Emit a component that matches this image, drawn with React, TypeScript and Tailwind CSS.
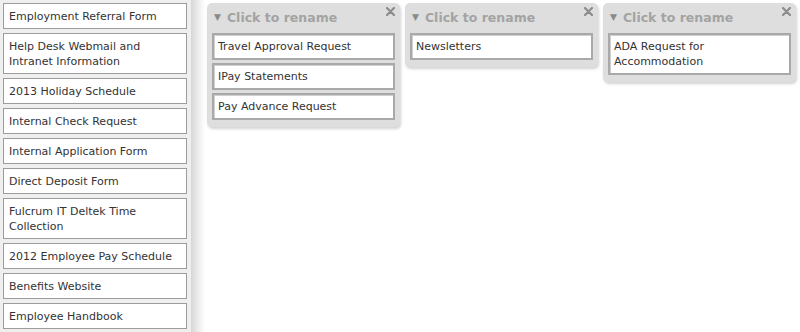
import React from "react"

const links = [
  "Employment Referral Form",
  "Help Desk Webmail and Intranet Information",
  "2013 Holiday Schedule",
  "Internal Check Request",
  "Internal Application Form",
  "Direct Deposit Form",
  "Fulcrum IT Deltek Time Collection",
  "2012 Employee Pay Schedule",
  "Benefits Website",
  "Employee Handbook",
]

const groups = [
  { items: ["Travel Approval Request", "IPay Statements", "Pay Advance Request"] },
  { items: ["Newsletters"] },
  { items: ["ADA Request for Accommodation"] },
]

function Group({ items }: { items: string[] }) {
  return (
    <div className="relative w-[193px] rounded-[5px] bg-[#dedede] px-[5px] pb-[7px] shadow-[1px_2px_3px_rgba(0,0,0,0.18)]">
      <div className="flex h-[30px] items-center gap-[6px] pl-[2px] text-[12.5px] font-bold text-[#a3a3a3]">
        <span className="text-[9px] text-[#8a8a8a]">▼</span>
        <span>Click to rename</span>
      </div>
      <svg className="absolute right-[5px] top-[4px]" width="9" height="9" viewBox="0 0 9 9">
        <path d="M1 1 L8 8 M8 1 L1 8" stroke="#8c8c8c" strokeWidth="2.2" strokeLinecap="round" />
      </svg>
      <div className="flex flex-col gap-[3px]">
        {items.map((item) => (
          <div
            key={item}
            className="border-2 border-[#a9a9a9] bg-white px-[4px] py-[4px] text-[11px] leading-[15px] text-[#333] shadow-[inset_1px_1px_0_#d0d0d0]">
            {item}
          </div>
        ))}
      </div>
    </div>
  )
}

export default function App() {
  return (
    <div className="flex h-[332px] w-[800px] overflow-hidden bg-white font-['DejaVu_Sans',Verdana,sans-serif]">
      {/* <--- sidebar ---> */}
      <aside className="flex w-[191px] shrink-0 flex-col gap-[4px] bg-[#efefef] px-[3px] pt-[3px]">
        {links.map((link) => (
          <div
            key={link}
            className="w-[184px] border border-[#9c9c9c] bg-white px-[5px] pb-[4px] pt-[5px] text-[11px] leading-[15px] text-[#333]">
            {link}
          </div>
        ))}
      </aside>
      <div className="w-[14px] shrink-0 bg-gradient-to-r from-[#d6d6d6] via-[#ececec] to-white" />

      {/* <--- groups ---> */}
      <main className="flex items-start gap-[5px] pl-[2px] pt-[3px]">
        {groups.map((g, i) => (
          <Group key={i} items={g.items} />
        ))}
      </main>
    </div>
  )
}
